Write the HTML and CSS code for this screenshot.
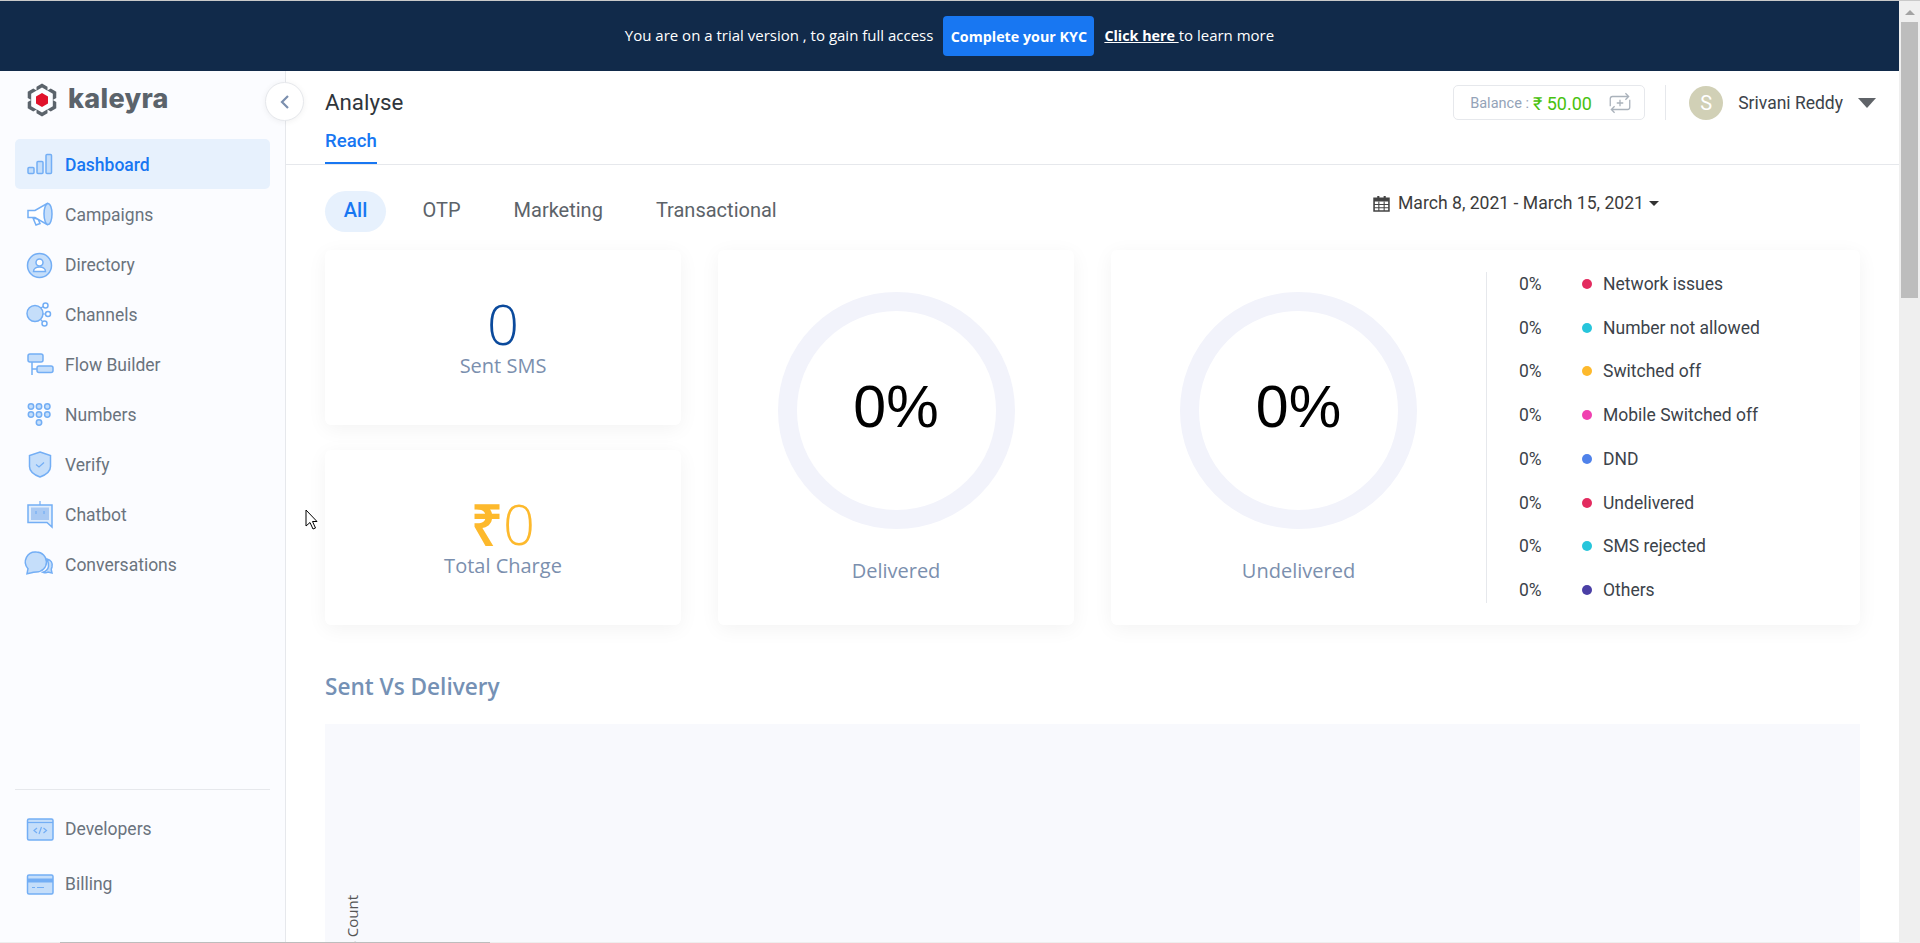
FILE: index.html
```html
<!DOCTYPE html>
<html lang="en">

<head>
  <meta charset="UTF-8" />
  <title>Kaleyra - Analyse</title>
  <link rel="stylesheet" href="styles.css">
</head>

<body>
  <div class="page">
    <div class="main">
      <!-- Trial banner -->
      <div class="banner">
        <span>You are on a trial version , to gain full access</span>
        <a class="kyc-btn">Complete your KYC</a>
        <span><a class="banner-link">Click here </a>to learn more</span>
      </div>

      <div class="shell">
        <aside class="sidebar">
          <div class="logo">
            <svg width="30" height="34" viewBox="2 0 30 34">
              <path d="M17 10l6 3.500v7l-6 3.500-6-3.500v-7z" fill="#e0112b" />
              <g fill="#5b636b">
                <path id="chunk" d="M17 .5l5.500 3.200v4l-5.500-3.200-5.500 3.200v-4z" />
                <use href="#chunk" transform="rotate(60 17 17)" />
                <use href="#chunk" transform="rotate(120 17 17)" />
                <use href="#chunk" transform="rotate(180 17 17)" />
                <use href="#chunk" transform="rotate(240 17 17)" />
                <use href="#chunk" transform="rotate(300 17 17)" />
              </g>
            </svg>
            <span class="logo-text">kaleyra</span>
          </div>

          <nav class="nav">
            <a class="nav-item active">
              <svg class="nav-icon" viewBox="0 0 27 27"><rect x="1" y="16.500" width="6" height="6" rx="1" /><rect x="10" y="10.500" width="6" height="12" rx="1" /><rect x="19" y="3.500" width="5.500" height="19" rx="1" /></svg>
              Dashboard
            </a>
            <a class="nav-item">
              <svg class="nav-icon" viewBox="0 0 27 27"><path d="M6 17l3 7 4-1.500-2-4.500z" fill="#fff" /><path d="M1 9.500h7l12-7v21l-12-7H1z" fill="#fff" /><ellipse cx="21" cy="13" rx="4" ry="10.500" /></svg>
              Campaigns
            </a>
            <a class="nav-item">
              <svg class="nav-icon" viewBox="0 0 27 27"><circle cx="12.500" cy="14.500" r="12" /><circle cx="12.500" cy="11.500" r="3.500" fill="#fff" /><path d="M6.500 20.500c0-6 12-6 12 0z" fill="#fff" /></svg>
              Directory
            </a>
            <a class="nav-item">
              <svg class="nav-icon" viewBox="0 0 27 27"><path class="thin" d="M12 8l6-3.500M16 13h5M12 17l5.500 5.500" /><circle cx="8" cy="12.500" r="8" /><circle cx="18.500" cy="4.500" r="2.500" fill="#fff" /><circle cx="21" cy="13" r="2.500" fill="#fff" /><circle cx="17.500" cy="22.500" r="2.500" fill="#fff" /></svg>
              Channels
            </a>
            <a class="nav-item">
              <svg class="nav-icon" viewBox="0 0 27 27"><rect x="1" y="3" width="15" height="8" rx="2" /><rect x="10" y="15" width="16" height="6.500" rx="2" /><path d="M5 11v13M5 18h5" /></svg>
              Flow Builder
            </a>
            <a class="nav-item">
              <svg class="nav-icon" viewBox="0 0 27 27"><circle cx="4" cy="5.500" r="2.700" /><circle cx="12" cy="5.500" r="2.700" /><circle cx="20.300" cy="5.500" r="2.700" /><circle cx="4" cy="13.500" r="2.700" /><circle cx="12" cy="13.500" r="2.700" /><circle cx="20.300" cy="13.500" r="2.700" /><circle cx="12" cy="21.500" r="2.700" /></svg>
              Numbers
            </a>
            <a class="nav-item">
              <svg class="nav-icon" viewBox="0 0 27 27"><path d="M13 1l10.500 3.500v11c0 5-5 8.500-10.500 10.500C7.500 24 2.500 20.500 2.500 15.500v-11z" /><path class="thin" d="M9 13.500l3 2.500 5-4.500" /></svg>
              Verify
            </a>
            <a class="nav-item">
              <svg class="nav-icon" viewBox="0 0 27 27"><path class="thin" d="M13 4V0" /><path d="M1 4h24v22l-5-4.500H1z" fill="#e2eefc" /><rect class="dark" x="4" y="6.500" width="18" height="12.500" /><path class="thin" d="M9 10v3M17 10v3" /></svg>
              Chatbot
            </a>
            <a class="nav-item">
              <svg class="nav-icon" viewBox="0 0 27 27"><path d="M20 8c4 1 6 4 5 8-.3 1-1 2-.7 3l.7 3-4-1c-1 .7-3 1-5 .3 3-1 5-3 5.500-6 .3-3-.5-5-1.500-7z" /><path d="M9.500 1a10 10 0 0 1 0 20c-2 0-3.500 0-5 .7l-4.500 1 1-5A10 10 0 0 1 9.500 1z" /></svg>
              Conversations
            </a>
          </nav>

          <div class="nav-bottom">
            <a class="nav-item">
              <svg class="nav-icon" viewBox="0 0 27 27"><rect x=".5" y="3" width="25.500" height="21" rx="1.500" /><path class="thin" d="M.5 6.500h25.500" /><path class="thin" d="M10 12l-3 2.500 3 2.500M16.500 12l3 2.500-3 2.500M14.500 11l-2.500 7" /></svg>
              Developers
            </a>
            <a class="nav-item">
              <svg class="nav-icon" viewBox="0 0 27 27"><rect x=".5" y="4" width="25.500" height="19" rx="1.500" /><path class="band" d="M.5 9.500h25.500" /><path class="thin" d="M5 16.500h3M10 16.500h7" /></svg>
              Billing
            </a>
          </div>
        </aside>

        <div class="toggle">
          <svg width="12" height="16" viewBox="0 0 12 16"><path d="M9 2L3 8l6 6" fill="none" stroke="#7b8fae" stroke-width="2.200" /></svg>
        </div>

        <div class="content">
          <header class="header">
            <div class="header-left">
              <h1 class="page-title">Analyse</h1>
              <a class="sub-tab">Reach</a>
            </div>
            <div class="header-right">
              <div class="balance">
                <span class="balance-label">Balance :</span>
                <span class="balance-value">₹ 50.00</span>
                <svg width="22" height="26" viewBox="0 0 20 24" fill="none" stroke="#aab2bb" stroke-width="1.200">
                  <path d="M1 15V8q0-2 2-2h15M15 3l3 3-3 3M19 9v7q0 2-2 2H2M5 15l-3 3 3 3M10 9v6M7 12h6" />
                </svg>
              </div>
              <div class="avatar">S</div>
              <span class="user-name">Srivani Reddy</span>
              <span class="user-caret"></span>
            </div>
          </header>

          <section class="body">
            <div class="filter-row">
              <div class="pills">
                <a class="pill active">All</a>
                <a class="pill">OTP</a>
                <a class="pill">Marketing</a>
                <a class="pill">Transactional</a>
              </div>
              <div class="date-range">
                <svg width="17" height="17" viewBox="0 0 16 16"><path d="M1 3h14v12H1z" fill="#fff" stroke="#444" stroke-width="1.500" /><path d="M1 3h14v3H1zM4 1h2v3H4zM10 1h2v3h-2z" fill="#444" /><path d="M1 9h14M1 12h14M5.500 6v9M10.500 6v9" stroke="#444" /></svg>
                <span>March 8, 2021 - March 15, 2021</span>
                <span class="date-caret"></span>
              </div>
            </div>

            <div class="cards">
              <div class="stack">
                <div class="card stat">
                  <div class="stat-num blue">0</div>
                  <div class="stat-label">Sent SMS</div>
                </div>
                <div class="card stat">
                  <div class="stat-num gold"><b>₹</b>0</div>
                  <div class="stat-label">Total Charge</div>
                </div>
              </div>

              <div class="card donut-card">
                <div class="donut">0%</div>
                <div class="donut-label">Delivered</div>
              </div>

              <div class="card wide-card">
                <div class="donut-col">
                  <div class="donut">0%</div>
                  <div class="donut-label">Undelivered</div>
                </div>
                <ul class="legend">
                  <li><span class="pct">0%</span><i class="dot red"></i>Network issues</li>
                  <li><span class="pct">0%</span><i class="dot cyan"></i>Number not allowed</li>
                  <li><span class="pct">0%</span><i class="dot amber"></i>Switched off</li>
                  <li><span class="pct">0%</span><i class="dot pink"></i>Mobile Switched off</li>
                  <li><span class="pct">0%</span><i class="dot sky"></i>DND</li>
                  <li><span class="pct">0%</span><i class="dot red"></i>Undelivered</li>
                  <li><span class="pct">0%</span><i class="dot cyan"></i>SMS rejected</li>
                  <li><span class="pct">0%</span><i class="dot indigo"></i>Others</li>
                </ul>
              </div>
            </div>

            <h2 class="section-title">Sent Vs Delivery</h2>
            <div class="chart">
              <span class="axis-label">SMS Count</span>
            </div>
          </section>
        </div>
      </div>

      <div class="hscroll"><div class="hthumb"></div></div>
    </div>

    <!-- Browser scrollbar -->
    <div class="vscroll">
      <span class="vscroll-arrow"></span>
      <div class="vthumb"></div>
    </div>
  </div>

  <svg class="cursor" width="14" height="22" viewBox="0 0 14 22">
    <path d="M1 1v16l4-3.500 3 6.500 2.500-1-3-6.500H12z" fill="#fff" stroke="#000" />
  </svg>
</body>

</html>
```

FILE: styles.css
```css
* {
  margin: 0;
  padding: 0;
  box-sizing: border-box;
}

html,
body {
  height: 943px;
  overflow: hidden;
}

body {
  font-family: Roboto, sans-serif;
  color: #333;
  background: #fff;
  border-top: 1px solid #c9c9c9;
}

ul {
  list-style: none;
}

.page {
  display: flex;
  height: 942px;
}

.main {
  flex: 1;
  min-width: 0;
  display: flex;
  flex-direction: column;
}

/* Banner */
.banner {
  height: 70px;
  flex-shrink: 0;
  background: #112a4a;
  color: #fff;
  font-family: "Open Sans", sans-serif;
  font-size: 15px;
  display: flex;
  align-items: center;
  justify-content: center;
  gap: 10px;
}

.banner > span {
  padding-bottom: 2px;
}

.kyc-btn {
  background: #1877f2;
  border-radius: 4px;
  font-size: 14.300px;
  font-weight: 700;
  height: 40px;
  width: 151px;
  display: flex;
  align-items: center;
  justify-content: center;
}

.banner-link {
  font-size: 14.300px;
  font-weight: 700;
  text-decoration: underline;
}

.shell {
  flex: 1;
  min-height: 0;
  display: flex;
  position: relative;
}

/* Sidebar */
.sidebar {
  width: 286px;
  flex-shrink: 0;
  background: #fbfcff;
  border-right: 1px solid #e6e8ec;
  padding: 0 15px;
  display: flex;
  flex-direction: column;
}

.logo {
  height: 68px;
  padding: 0 0 10px 12px;
  display: flex;
  align-items: center;
  gap: 11px;
}

.logo-text {
  margin-bottom: 4px;
  font-family: Inter, sans-serif;
  font-weight: 800;
  font-size: 27px;
  letter-spacing: 0.3px;
  color: #5b636b;
}

.nav-item {
  height: 50px;
  display: flex;
  align-items: center;
  gap: 11px;
  padding-left: 12px;
  border-radius: 5px;
  font-size: 17.500px;
  color: #6a737d;
}

.nav .nav-item {
  padding-top: 2px;
}

.nav .nav-icon {
  margin-top: -2px;
}

.nav-item.active {
  background: #e7f1fd;
  color: #1877f2;
  font-weight: 500;
}

.nav-icon {
  width: 27px;
  height: 27px;
  flex-shrink: 0;
  overflow: visible;
  fill: #c5defa;
  stroke: #73aef5;
  stroke-width: 1.500;
}

.nav-icon .thin {
  fill: none;
  stroke-width: 1.200;
}

.nav-icon .dark {
  fill: #a9c9f3;
  stroke: none;
}

.nav-icon .band {
  stroke-width: 4;
}

.nav-bottom {
  margin-top: auto;
  margin-bottom: 33px;
  padding-top: 14px;
  border-top: 1px solid #e6e8ec;
  display: flex;
  flex-direction: column;
  gap: 5px;
}

.toggle {
  position: absolute;
  left: 265px;
  top: 11px;
  width: 39px;
  height: 39px;
  border-radius: 50%;
  background: #fff;
  border: 1px solid #e6e8ec;
  box-shadow: 0 1px 6px rgba(0, 0, 0, 0.06);
  display: flex;
  align-items: center;
  justify-content: center;
}

/* Header */
.content {
  flex: 1;
  min-width: 0;
  display: flex;
  flex-direction: column;
}

.header {
  height: 94px;
  flex-shrink: 0;
  border-bottom: 1px solid #e6e8ec;
  padding: 0 23px 0 39px;
  display: flex;
  justify-content: space-between;
}

.header-left {
  display: flex;
  flex-direction: column;
  align-items: flex-start;
}

.page-title {
  font-size: 22.300px;
  font-weight: 400;
  color: #2f353b;
  line-height: 24px;
  margin-top: 19px;
}

.sub-tab {
  margin-top: 14px;
  height: 37px;
  line-height: 26px;
  font-size: 18.600px;
  font-weight: 500;
  color: #1877f2;
  border-bottom: 2px solid #1877f2;
}

.header-right {
  display: flex;
  align-items: center;
  height: 63px;
}

.balance {
  width: 192px;
  height: 35px;
  border: 1px solid #e6e8ec;
  border-radius: 5px;
  padding: 2px 0 0 16px;
  display: flex;
  align-items: center;
  font-size: 14.500px;
  color: #94a3b8;
}

.balance svg {
  margin-top: -2px;
}

.balance-value {
  color: #48c10e;
  font-size: 18px;
  margin-left: 4px;
  margin-right: 17px;
}

.avatar {
  width: 34px;
  height: 34px;
  border-radius: 50%;
  background: #d1d0b6;
  color: #fff;
  font-size: 20px;
  display: flex;
  align-items: center;
  justify-content: center;
  margin-left: 44px;
  margin-right: 15px;
  position: relative;
}

.avatar::before {
  content: "";
  position: absolute;
  left: -24px;
  top: -1px;
  height: 35px;
  border-left: 1px solid #e6e8ec;
}

.user-name {
  font-size: 17.500px;
  color: #3c434a;
}

.user-caret {
  margin-left: 15px;
  border-left: 9px solid transparent;
  border-right: 9px solid transparent;
  border-top: 10px solid #5f6368;
}

/* Body */
.body {
  padding: 26px 39px 0 39px;
  flex: 1;
  min-height: 0;
  display: flex;
  flex-direction: column;
}

.filter-row {
  display: flex;
  justify-content: space-between;
  height: 59px;
}

.pills {
  display: flex;
  align-items: flex-start;
}

.pill {
  height: 41px;
  line-height: 39px;
  padding: 0 26.500px;
  border-radius: 21px;
  font-size: 20px;
  color: #5c6369;
}

.pill.active {
  width: 61px;
  padding: 0;
  margin-right: 10px;
  text-align: center;
  background: #e7f1fd;
  color: #1877f2;
  font-weight: 500;
}

.date-range {
  margin-right: 201px;
  height: 24px;
  display: flex;
  align-items: center;
  gap: 8px;
  font-size: 17.600px;
  color: #3c3c3c;
}

.date-caret {
  margin-left: -3px;
  border-left: 5px solid transparent;
  border-right: 5px solid transparent;
  border-top: 5px solid #333;
}

.cards {
  display: grid;
  grid-template-columns: 356px 356px 749px;
  gap: 37px;
  height: 375px;
  flex-shrink: 0;
}

.stack {
  display: flex;
  flex-direction: column;
  gap: 25px;
}

.card {
  background: #fff;
  border-radius: 6px;
  box-shadow: 0 4px 20px rgba(0, 0, 0, 0.05);
}

.stat {
  flex: 1;
  display: flex;
  flex-direction: column;
  align-items: center;
  padding-top: 43px;
}

.stat-num {
  font-family: "Open Sans", sans-serif;
  font-weight: 300;
  font-size: 56px;
  line-height: 60px;
}

.stat-num b {
  font-weight: 600;
}

.blue {
  color: #0b4a9c;
}

.gold {
  color: #fdb92c;
}

.stat-label {
  margin-top: 1px;
  font-family: "Open Sans", sans-serif;
  font-size: 20px;
  line-height: 24px;
  color: #7b8fae;
}

.donut-card,
.donut-col {
  display: flex;
  flex-direction: column;
  align-items: center;
  padding-top: 42px;
}

.donut {
  width: 237px;
  height: 237px;
  border-radius: 50%;
  border: 19px solid #f2f3fb;
  padding-bottom: 8px;
  display: flex;
  align-items: center;
  justify-content: center;
  font-family: "Liberation Sans", sans-serif;
  font-size: 59px;
  color: #000;
}

.donut-label {
  margin-top: 30px;
  font-family: "Open Sans", sans-serif;
  font-size: 20px;
  line-height: 24px;
  color: #7b8fae;
}

.wide-card {
  display: flex;
  align-items: flex-start;
}

.donut-col {
  width: 375px;
}

.legend {
  margin-top: 22px;
  height: 331px;
  border-left: 1px solid #e6e8ec;
  padding: 1px 0 2px 32px;
  display: flex;
  flex-direction: column;
  justify-content: space-between;
  font-size: 17.500px;
  color: #3c434a;
}

.legend li {
  height: 22px;
  line-height: 22px;
  display: flex;
  align-items: center;
}

.pct {
  width: 63px;
}

.dot {
  width: 10px;
  height: 10px;
  border-radius: 50%;
  margin-right: 11px;
}

.red { background: #e32b5f; }
.cyan { background: #27c5db; }
.amber { background: #fdb92c; }
.pink { background: #f040b0; }
.sky { background: #4f82ea; }
.indigo { background: #4a3fa5; }

.section-title {
  margin-top: 47px;
  font-family: "Open Sans", sans-serif;
  font-size: 22.600px;
  font-weight: 600;
  line-height: 30px;
  color: #7591b5;
}

.chart {
  position: relative;
  margin-top: 22px;
  flex: 1;
  min-height: 0;
  background: #f8f9fd;
  overflow: hidden;
}

.axis-label {
  position: absolute;
  left: 17px;
  top: 171px;
  writing-mode: vertical-rl;
  transform: rotate(180deg);
  font-family: "Open Sans", sans-serif;
  font-size: 15px;
  color: #555;
  white-space: nowrap;
}

/* Fake browser scrollbars */
.hscroll {
  height: 1px;
  flex-shrink: 0;
  background: #eee;
  position: relative;
}

.hthumb {
  margin-left: 60px;
  width: 430px;
  height: 1px;
  background: #bdbdbd;
}

.vscroll {
  width: 21px;
  flex-shrink: 0;
  background: #efefef;
  padding: 0 2px;
  display: flex;
  flex-direction: column;
  align-items: center;
}

.vscroll-arrow {
  margin-top: 9px;
  border-left: 5px solid transparent;
  border-right: 5px solid transparent;
  border-bottom: 5px solid #a3a3a3;
}

.vthumb {
  margin-top: 7px;
  width: 17px;
  height: 276px;
  background: #bdbdbd;
}

.cursor {
  position: absolute;
  left: 305px;
  top: 509px;
}
```
